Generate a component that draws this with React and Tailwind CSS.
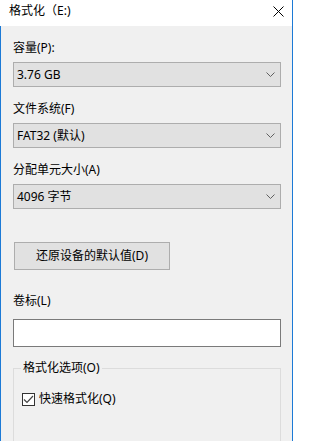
import React from "react";

const font = { fontFamily: '"Noto Sans", "Noto Sans CJK SC", sans-serif' };

const Chevron = () => (
  <svg width="9" height="5" viewBox="0 0 9 5" className="text-[#606060]">
    <path d="M0.5 0.5 L4.5 4.5 L8.5 0.5" fill="none" stroke="currentColor" strokeWidth="1" />
  </svg>
);

const Combo = ({ value }) => (
  <div className="h-[25px] w-[268px] border border-[#adadad] bg-[#e1e1e1] flex items-center justify-between pl-[3px] pr-[5px]">
    <span className="leading-[16px]">{value}</span>
    <Chevron />
  </div>
);

const Label = ({ children, className = "" }) => (
  <div className={"h-[16px] leading-[16px] " + className}>{children}</div>
);

export default function App() {
  return (
    <div className="w-[295px] h-[441px] bg-white overflow-hidden flex text-[12px] text-black" style={font}>
      <div className="w-[293px] h-full border-r border-[#1c7ad6] flex flex-col">
        <div className="h-[26px] bg-white flex items-center justify-between pl-[9px] pr-[8px] shrink-0">
          <span className="leading-[16px] -mt-[4px]">格式化（E:)</span>
          <svg width="11" height="11" viewBox="0 0 11 11" className="-mt-[4px]">
            <path d="M0.5 0.5 L10.5 10.5 M10.5 0.5 L0.5 10.5" stroke="#000" strokeWidth="1" />
          </svg>
        </div>
        <div className="flex-1 bg-[#f0f0f0] border-l border-[#1c7ad6] pl-[12px] flex flex-col">
          <Label className="mt-[14px]">容量(P):</Label>
          <div className="mt-[6px]">
            <Combo value="3.76 GB" />
          </div>
          <Label className="mt-[14px]">文件系统(F)</Label>
          <div className="mt-[6px]">
            <Combo value="FAT32 (默认)" />
          </div>
          <Label className="mt-[14px]">分配单元大小(A)</Label>
          <div className="mt-[6px]">
            <Combo value="4096 字节" />
          </div>
          <button className="mt-[33px] ml-[1px] h-[28px] w-[156px] border border-[#adadad] bg-[#e1e1e1] leading-[16px]">
            还原设备的默认值(D)
          </button>
          <Label className="mt-[23px]">卷标(L)</Label>
          <div className="mt-[10px] h-[28px] w-[268px] border border-[#7a7a7a] bg-white" />
          <fieldset className="mt-[13px] w-[268px] h-[120px] border border-[#dcdcdc] pl-[6px]">
            <legend className="px-[2px] leading-[16px] ml-[1px]">格式化选项(O)</legend>
            <div className="mt-[15px] flex items-center h-[16px] pl-[2px]">
              <div className="w-[13px] h-[13px] border border-[#333] bg-white flex items-center justify-center">
                <svg width="11" height="9" viewBox="0 0 11 9">
                  <path d="M1 4.5 L4 7.5 L10 1" fill="none" stroke="#444" strokeWidth="1.2" />
                </svg>
              </div>
              <span className="ml-[4px] leading-[16px]">快速格式化(Q)</span>
            </div>
          </fieldset>
        </div>
      </div>
    </div>
  );
}
